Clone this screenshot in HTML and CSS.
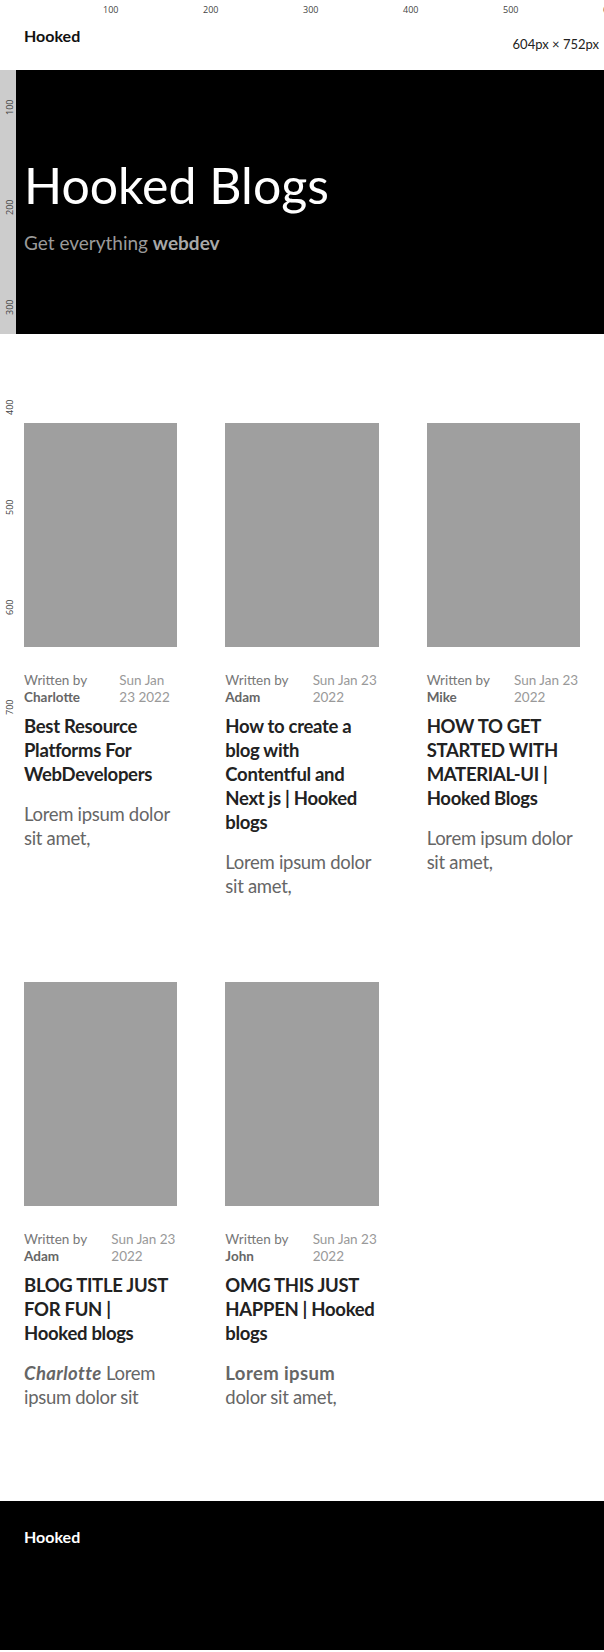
FILE: index.html
```html
<!DOCTYPE html>
<html lang="en">
<head>
<meta charset="utf-8">
<title>Hooked Blogs</title>
<link rel="stylesheet" href="styles.css">
</head>
<body>
<div class="ruler-top"><span>100</span><span>200</span><span>300</span><span>400</span><span>500</span><span>600</span></div>
<div class="ruler-left"><span>100</span><span>200</span><span>300</span><span>400</span><span>500</span><span>600</span><span>700</span></div>
<div class="viewport-size">604px × 752px</div>

<header class="nav"><span class="brand">Hooked</span></header>

<section class="hero">
  <h1 class="hero-title">Hooked Blogs</h1>
  <p class="hero-sub">Get everything <strong>webdev</strong></p>
</section>

<main class="posts">
  <article class="card">
    <div class="thumb"></div>
    <div class="meta">
      <div class="author"><span>Written by</span><strong>Charlotte</strong></div>
      <div class="date date-narrow">Sun Jan 23 2022</div>
    </div>
    <h2 class="card-title">Best Resource Platforms For WebDevelopers</h2>
    <p class="excerpt">Lorem ipsum dolor sit amet,</p>
  </article>
  <article class="card">
    <div class="thumb"></div>
    <div class="meta">
      <div class="author"><span>Written by</span><strong>Adam</strong></div>
      <div class="date">Sun Jan 23 2022</div>
    </div>
    <h2 class="card-title">How to create a blog with Contentful and Next js | Hooked blogs</h2>
    <p class="excerpt">Lorem ipsum dolor sit amet,</p>
  </article>
  <article class="card">
    <div class="thumb"></div>
    <div class="meta">
      <div class="author"><span>Written by</span><strong>Mike</strong></div>
      <div class="date">Sun Jan 23 2022</div>
    </div>
    <h2 class="card-title">HOW TO GET STARTED WITH MATERIAL-UI | Hooked Blogs</h2>
    <p class="excerpt">Lorem ipsum dolor sit amet,</p>
  </article>
  <article class="card">
    <div class="thumb"></div>
    <div class="meta">
      <div class="author"><span>Written by</span><strong>Adam</strong></div>
      <div class="date">Sun Jan 23 2022</div>
    </div>
    <h2 class="card-title">BLOG TITLE JUST FOR FUN | Hooked blogs</h2>
    <p class="excerpt"><strong><em>Charlotte</em></strong> Lorem ipsum dolor sit</p>
  </article>
  <article class="card">
    <div class="thumb"></div>
    <div class="meta">
      <div class="author"><span>Written by</span><strong>John</strong></div>
      <div class="date">Sun Jan 23 2022</div>
    </div>
    <h2 class="card-title">OMG THIS JUST HAPPEN | Hooked blogs</h2>
    <p class="excerpt"><strong>Lorem ipsum</strong> dolor sit amet,</p>
  </article>
</main>

<footer class="footer"><span class="brand">Hooked</span></footer>
</body>
</html>
```
FILE: styles.css
```css
* { box-sizing: border-box; }

body {
  margin: 0;
  font-family: Lato, "Open Sans", sans-serif;
  color: #222;
  background: #fff;
  position: relative;
}

/* devtools-like rulers overlay */
.ruler-top {
  position: absolute;
  top: 0;
  left: 0;
  width: 100%;
  height: 16px;
  display: flex;
  padding-left: 103px;
  font-family: "Open Sans", sans-serif;
  font-size: 9px;
  line-height: 1;
  color: #444;
  overflow: hidden;
  pointer-events: none;
}
.ruler-top span {
  flex: 0 0 100px;
  padding-top: 5px;
}

.ruler-left {
  position: absolute;
  top: 0;
  left: 0;
  width: 16px;
  height: 752px;
  background: rgba(255, 255, 255, 0.8);
  display: flex;
  flex-direction: column;
  padding-top: 100px;
  font-family: "Open Sans", sans-serif;
  font-size: 9px;
  line-height: 1;
  color: #444;
  pointer-events: none;
  z-index: 2;
}
.ruler-left span {
  flex: 0 0 100px;
  writing-mode: vertical-rl;
  transform: rotate(180deg);
  text-align: right;
  padding-right: 5px;
}

.viewport-size {
  position: absolute;
  top: 36px;
  right: 5px;
  font-size: 13px;
  color: #222;
}

.nav {
  height: 70px;
  display: flex;
  align-items: center;
  padding: 0 24px;
}
.brand {
  font-size: 16px;
  font-weight: 700;
  color: #111;
}

.hero {
  background: #000;
  height: 264px;
  display: flex;
  flex-direction: column;
  justify-content: center;
  padding: 4px 24px 0;
}
.hero-title {
  margin: 0;
  color: #fff;
  font-size: 50px;
  font-weight: 400;
  line-height: 1.2;
}
.hero-sub {
  margin: 16px 0 0;
  color: #9a9a9a;
  font-size: 19px;
}
.hero-sub strong { color: #a8a8a8; }

.posts {
  display: grid;
  grid-template-columns: repeat(3, 1fr);
  column-gap: 48px;
  row-gap: 68px;
  padding: 89px 24px 76px;
}

.card {
  display: flex;
  flex-direction: column;
}
.thumb {
  height: 224px;
  background: #9f9f9f;
}
.meta {
  display: flex;
  justify-content: space-between;
  margin-top: 25px;
  font-size: 13.5px;
  line-height: 17px;
}
.author {
  display: flex;
  flex-direction: column;
  color: #777;
  white-space: nowrap;
}
.author strong { color: #666; }
.date {
  flex: 0 0 66px;
  color: #999;
}
.date-narrow { flex-basis: 58px; }

.card-title {
  margin: 8px 0 0;
  font-size: 18.5px;
  font-weight: 700;
  line-height: 24px;
  letter-spacing: -0.3px;
  color: #222;
}
.excerpt {
  margin: 16px 0 16px;
  font-size: 18.5px;
  line-height: 24px;
  letter-spacing: -0.3px;
  color: #666;
}
.excerpt strong { letter-spacing: 0.4px; }

.footer {
  background: #000;
  height: 149px;
  padding: 26px 24px 0;
}
.footer .brand { color: #fff; }
```
